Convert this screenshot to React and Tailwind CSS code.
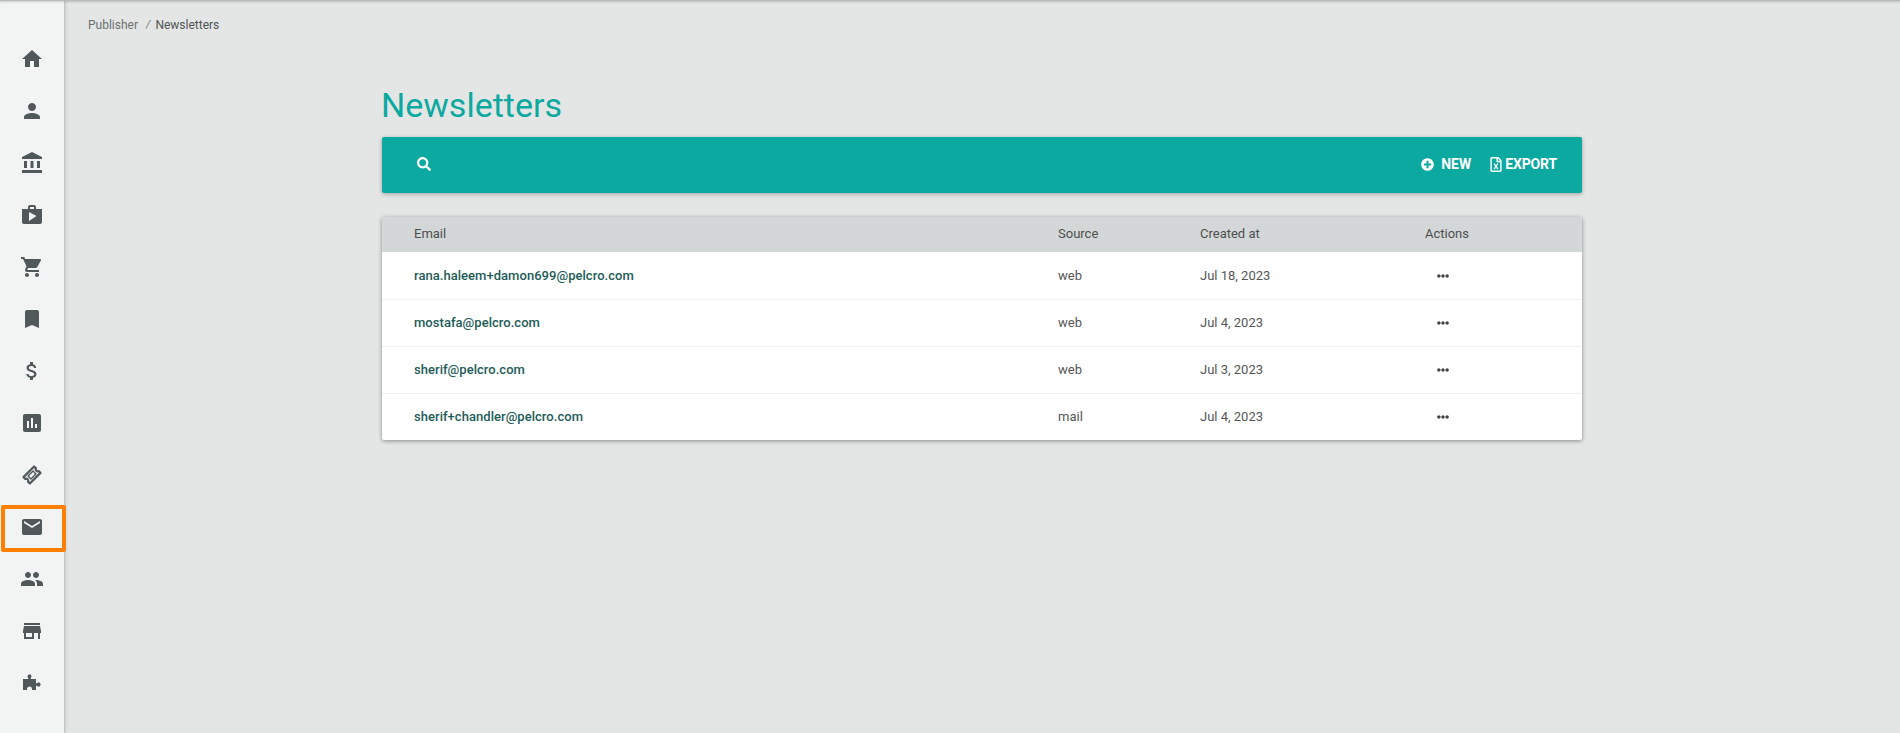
import React from "react";
import { MdHome, MdPerson, MdAccountBalance, MdShop, MdShoppingCart, MdBookmark, MdAttachMoney, MdAssessment, MdEmail, MdPeople, MdStore } from "react-icons/md";
import { FaSearch, FaPlusCircle, FaRegFileExcel, FaEllipsisH } from "react-icons/fa";

function Ticket({ className }) {
  return (
    <svg viewBox="0 0 24 24" className={className} fill="none" stroke="currentColor">
      <g transform="rotate(-45 12 12)">
        <path strokeWidth="2.2" strokeLinejoin="round" d="M4.5 7.5h15v2.6a2 2 0 0 0 0 3.8v2.6h-15v-2.6a2 2 0 0 0 0-3.8z" />
        <path strokeWidth="1.4" d="M8.5 10h7v4h-7z" />
      </g>
    </svg>
  );
}

function Puzzle({ className }) {
  return (
    <svg viewBox="0 0 24 24" className={className} fill="currentColor">
      <path d="M3 8h5.2V6.9a2 2 0 1 1 2.6 0V8H16v4.2h1.1a2 2 0 1 1 0 2.6H16V19h-4v-1a2.5 2.5 0 0 0-5 0v1H3z" />
    </svg>
  );
}

const nav = [MdHome, MdPerson, MdAccountBalance, MdShop, MdShoppingCart, MdBookmark, MdAttachMoney, MdAssessment, Ticket, MdEmail, MdPeople, MdStore, Puzzle];
const rows = [
  ["rana.haleem+damon699@pelcro.com", "web", "Jul 18, 2023"],
  ["mostafa@pelcro.com", "web", "Jul 4, 2023"],
  ["sherif@pelcro.com", "web", "Jul 3, 2023"],
  ["sherif+chandler@pelcro.com", "mail", "Jul 4, 2023"],
];

export default function App() {
  return (
    <div className="relative flex h-[733px] overflow-hidden bg-[#e4e6e5] font-['Roboto',sans-serif] text-[#4d5556]">
      <div className="absolute inset-x-0 top-0 z-10 h-px bg-[#b9bbbb] shadow-[0_1px_2px_rgba(0,0,0,0.25)]" />
      <aside className="flex w-[65px] shrink-0 flex-col items-center border-r border-[#c4c7c7] bg-[#f2f4f4] pt-[33px] shadow-[1px_0_3px_rgba(0,0,0,0.12)]">
        {nav.map((Icon, i) => (
          <div key={i} className="relative flex h-[52px] w-full items-center justify-center">
            <Icon className="h-6 w-6 text-[#515859]" />
            {i === 9 && <div className="absolute left-[1px] top-[4px] z-10 h-[47px] w-[65px] rounded-[2px] border-[4px] border-[#ff8000]" />}
          </div>
        ))}
      </aside>
      <main className="flex min-w-0 flex-1 flex-col">
        <div className="flex h-[49px] items-start pl-[23px] pt-[17px] text-[12px] leading-[16px]">
          <span className="text-[#6b7071]">Publisher</span>
          <span className="ml-[8px] mr-[5px] text-[11px] italic text-[#777]">/</span>
          <span className="text-[#4f5556]">Newsletters</span>
        </div>
        <div className="ml-[317px] w-[1200px]">
          <h1 className="-ml-px mt-[36px] h-[52px] text-[34px] font-normal leading-[40px] text-[#0ba9a0]">Newsletters</h1>
          <div className="flex h-[56px] items-center justify-between rounded-[2px] bg-[#0ba9a0] pb-[2px] pl-[35px] pr-[25px] text-white shadow-[0_1px_4px_rgba(0,0,0,0.3)]">
            <FaSearch className="h-[14px] w-[14px]" />
            <div className="flex items-center text-[14px] font-bold leading-[16px]">
              <FaPlusCircle className="mr-[7px] h-[13px] w-[13px]" />
              <span>NEW</span>
              <FaRegFileExcel className="ml-[19px] mr-[3px] h-[15px] w-[12px]" />
              <span className="tracking-[-0.01em]">EXPORT</span>
            </div>
          </div>
          <div className="mt-[24px] rounded-[2px] bg-white text-[13px] shadow-[0_1px_4px_rgba(0,0,0,0.4)]">
            <div className="grid h-[35px] grid-cols-[644px_142px_225px_1fr] items-center rounded-t-[2px] bg-[#d4d7d7] pb-[2px] pl-[32px] text-[#4c4f4f]">
              <span>Email</span>
              <span>Source</span>
              <span>Created at</span>
              <span>Actions</span>
            </div>
            {rows.map((r, i) => (
              <div key={r[0]} className={i > 0 ? "grid h-[47px] grid-cols-[644px_142px_225px_1fr] items-center border-t border-[#eeefef] pl-[32px]" : "grid h-[47px] grid-cols-[644px_142px_225px_1fr] items-center pl-[32px]"}>
                <span className="font-medium tracking-[0.003em] text-[#1e5c58]">{r[0]}</span>
                <span className="text-[#555757]">{r[1]}</span>
                <span className="text-[#555757]">{r[2]}</span>
                <span className="pl-[12px]"><FaEllipsisH className="h-[12px] w-[12px] text-[#444]" /></span>
              </div>
            ))}
          </div>
        </div>
      </main>
    </div>
  );
}
